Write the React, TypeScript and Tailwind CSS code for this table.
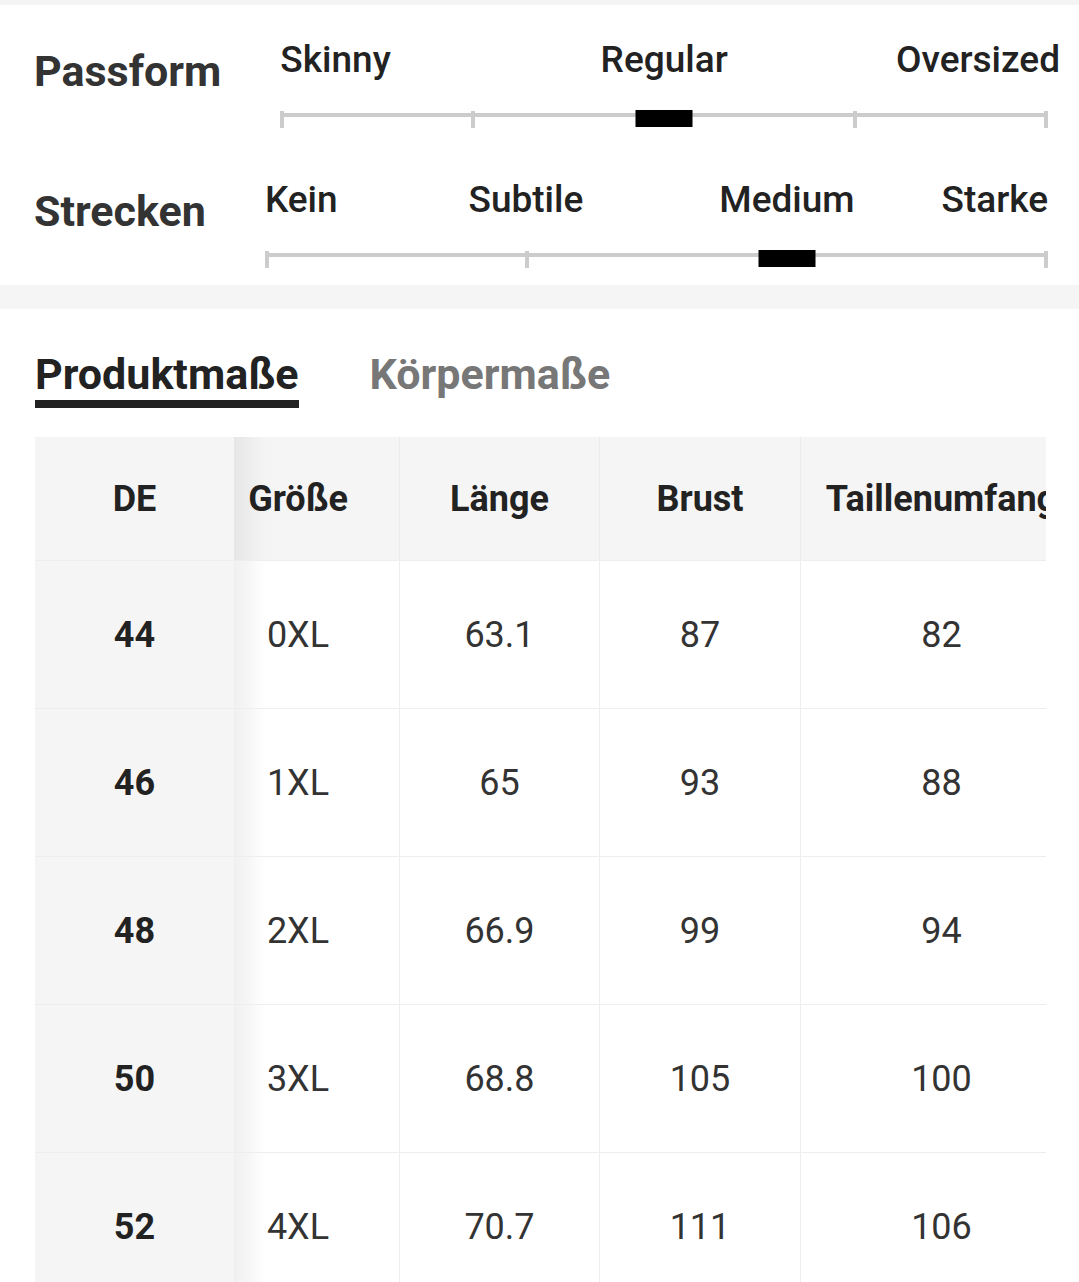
import React from 'react';

type SliderLabel = { text: string; at: number };

interface SliderRowProps {
  title: string;
  steps: number;
  value: number;
  labels: SliderLabel[];
  overhang?: number;
}

const sliders: SliderRowProps[] = [
  {
    title: 'Passform',
    steps: 4,
    value: 2,
    labels: [
      { text: 'Skinny', at: 0 },
      { text: 'Regular', at: 2 },
      { text: 'Oversized', at: 4 },
    ],
    overhang: 12,
  },
  {
    title: 'Strecken',
    steps: 3,
    value: 2,
    labels: [
      { text: 'Kein', at: 0 },
      { text: 'Subtile', at: 1 },
      { text: 'Medium', at: 2 },
      { text: 'Starke', at: 3 },
    ],
  },
];

const columns = ['Länge', 'Brust', 'Taillenumfang'];

const rows = [
  { de: '44', size: '0XL', values: ['63.1', '87', '82'] },
  { de: '46', size: '1XL', values: ['65', '93', '88'] },
  { de: '48', size: '2XL', values: ['66.9', '99', '94'] },
  { de: '50', size: '3XL', values: ['68.8', '105', '100'] },
  { de: '52', size: '4XL', values: ['70.7', '111', '106'] },
];

const colWidths = ['w-[200px]', 'w-[201px]', 'w-[282px]'];

function SliderRow({ title, steps, value, labels, overhang = 0 }: SliderRowProps) {
  const ticks = Array.from({ length: steps + 1 }, (_, i) => i).filter((i) => i !== value);
  const pct = (i: number) => (i / steps) * 100;

  return (
    <div className="flex items-start gap-[59px]">
      <div className="mt-[9px] text-[43px] leading-[43px] font-bold text-[#333] whitespace-nowrap">{title}</div>
      <div className="flex-1">
        <div className="relative h-[37px] text-[37px] leading-[37px] font-medium text-[#222]">
          {labels.map((l, idx) => {
            const first = idx === 0;
            const last = idx === labels.length - 1;
            if (first) {
              return (
                <span key={l.text} className="absolute left-0 top-0 whitespace-nowrap">
                  {l.text}
                </span>
              );
            }
            if (last) {
              return (
                <span key={l.text} className="absolute top-0 whitespace-nowrap" style={{ right: -overhang }}>
                  {l.text}
                </span>
              );
            }
            return (
              <span
                key={l.text}
                className="absolute top-0 -translate-x-1/2 whitespace-nowrap"
                style={{ left: `${pct(l.at)}%` }}
              >
                {l.text}
              </span>
            );
          })}
        </div>
        <div className="relative mt-[32px] h-[18px]">
          <div className="absolute left-0 right-0 top-[3px] h-[4px] bg-[#cccccc]" />
          {ticks.map((t) => (
            <div
              key={t}
              className="absolute top-[1px] h-[17px] w-[4px] bg-[#cccccc]"
              style={{ left: `calc(${pct(t)}% - ${(t / steps) * 4}px)` }}
            />
          ))}
          <div
            className="absolute top-0 h-[17px] w-[57px] -translate-x-1/2 bg-black"
            style={{ left: `${pct(value)}%` }}
          />
        </div>
      </div>
    </div>
  );
}

function StickyCell({ children, header }: { children: React.ReactNode; header?: boolean }) {
  return (
    <div
      className={`relative flex w-[199px] shrink-0 items-center justify-center bg-[#f5f5f5] text-[36px] font-bold text-[#222] ${
        header ? 'h-[123px]' : 'h-[147px]'
      }`}
    >
      {children}
      <div className="absolute left-full top-0 bottom-0 z-10 w-[33px] bg-gradient-to-r from-black/[0.06] to-transparent" />
    </div>
  );
}

export default function App() {
  return (
    <div className="h-[1282px] w-full overflow-hidden bg-white font-['Roboto','Liberation_Sans',sans-serif]">
      <div className="h-[5px] bg-[#f4f4f4]" />

      <section className="flex flex-col gap-[53px] pl-[34px] pr-[31px] pt-[36px] pb-[17px]">
        {sliders.map((s) => (
          <SliderRow key={s.title} {...s} />
        ))}
      </section>

      <div className="h-[24px] bg-[#f5f5f5]" />

      <section className="pl-[35px] pt-[44px]">
        <div className="flex items-start gap-[71px] text-[43px] leading-[43px] font-bold">
          <div className="flex flex-col">
            <span className="text-[#222]">Produktmaße</span>
            <div className="mt-[4px] h-[8px] bg-[#222]" />
          </div>
          <span className="text-[#777]">Körpermaße</span>
        </div>

        <div className="mt-[29px] w-[1011px] overflow-hidden text-[36px] leading-none">
          <div className="flex w-max border-b border-[#eeeeee] bg-[#f5f5f5]">
            <StickyCell header>DE</StickyCell>
            <div className="flex h-[123px] w-[165px] shrink-0 items-center justify-center pr-[37px] font-bold text-[#222]">
              Größe
            </div>
            {columns.map((c, i) => (
              <div
                key={c}
                className={`flex h-[123px] shrink-0 items-center justify-center whitespace-nowrap border-l border-[#ececec] font-bold text-[#222] ${colWidths[i]}`}
              >
                {c}
              </div>
            ))}
          </div>

          {rows.map((r) => (
            <div key={r.de} className="flex w-max border-b border-[#eeeeee]">
              <StickyCell>{r.de}</StickyCell>
              <div className="flex h-[147px] w-[165px] shrink-0 items-center justify-center pr-[37px] text-[#333]">
                {r.size}
              </div>
              {r.values.map((v, i) => (
                <div
                  key={i}
                  className={`flex h-[147px] shrink-0 items-center justify-center border-l border-[#eeeeee] text-[#333] ${colWidths[i]}`}
                >
                  {v}
                </div>
              ))}
            </div>
          ))}
        </div>
      </section>
    </div>
  );
}
